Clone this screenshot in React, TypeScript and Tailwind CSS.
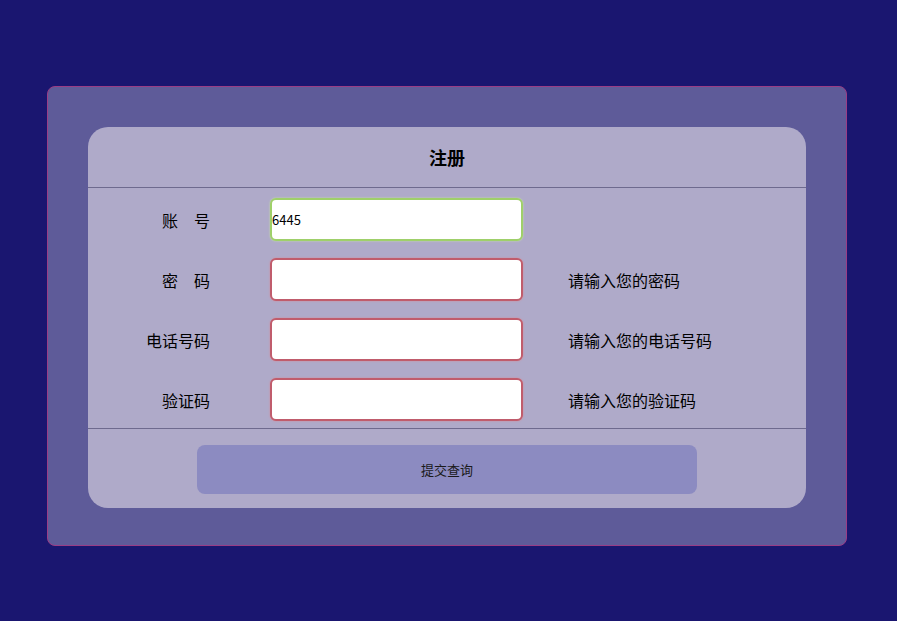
import { useState } from 'react';

const FIELDS = [
  { label: '账\u3000号', value: '6445', hint: '', ok: true },
  { label: '密\u3000码', value: '', hint: '请输入您的密码', ok: false },
  { label: '电话号码', value: '', hint: '请输入您的电话号码', ok: false },
  { label: '验证码', value: '', hint: '请输入您的验证码', ok: false },
];

export default function App() {
  const [values, setValues] = useState(FIELDS.map((f) => f.value));

  return (
    <div
      className="min-h-[621px] bg-[#1a1670] pt-[86px] pl-[47px]"
      style={{ fontFamily: '"Noto Sans CJK SC", "Noto Sans", sans-serif' }}
    >
      <div className="w-[800px] h-[460px] rounded-[8px] border border-[#9a3d86] bg-[#5e5b99] pt-[40px] pl-[40px]">
        <div className="w-[718px] h-[381px] rounded-[20px] bg-[#afaac9] flex flex-col">
          {/* Title */}
          <div className="h-[61px] flex items-center justify-center border-b border-[#6e6a8e]">
            <h1 className="text-[18px] font-bold text-black leading-none">注册</h1>
          </div>

          {/* Fields */}
          <div className="flex flex-col gap-[17px] pt-[10px] pb-[7px] border-b border-[#6e6a8e]">
            {FIELDS.map((f, i) => (
              <div key={i} className="flex items-center h-[43px]">
                <label className="w-[122px] text-right text-[16px] text-black whitespace-pre">{f.label}</label>
                <input
                  value={values[i]}
                  onChange={(e) => setValues(values.map((v, j) => (j === i ? e.target.value : v)))}
                  className={`ml-[60px] w-[253px] h-[43px] rounded-[6px] bg-white border-2 outline-none px-0 text-[13px] text-black ${
                    f.ok
                      ? 'border-[#9fd06a] shadow-[0_0_2px_#c9e8a0]'
                      : 'border-[#c05c6c] shadow-[0_0_2px_#d98a96]'
                  }`}
                />
                {f.hint && <span className="ml-[45px] text-[16px] text-black">{f.hint}</span>}
              </div>
            ))}
          </div>

          {/* Submit */}
          <div className="pt-[16px] pl-[109px]">
            <button className="w-[500px] h-[49px] rounded-[8px] bg-[#8c8bc1] text-[13px] text-[#1a1a1a]">
              提交查询
            </button>
          </div>
        </div>
      </div>
    </div>
  );
}
